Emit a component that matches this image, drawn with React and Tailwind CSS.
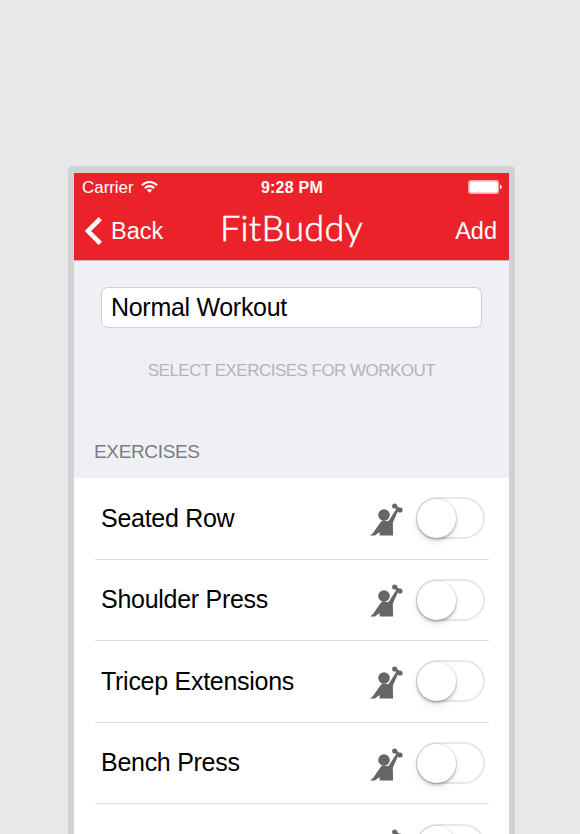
const exercises = ['Seated Row', 'Shoulder Press', 'Tricep Extensions', 'Bench Press', ''];

function LiftIcon() {
  return (
    <svg className="mt-[3px] h-9 w-[34px] shrink-0" viewBox="0 0 34 36" fill="#666666">
      <circle cx="14" cy="13" r="5.8" />
      <circle cx="24.7" cy="4" r="2.6" />
      <circle cx="30" cy="8" r="2.6" />
      <path d="M24.7 4.8 25.9 3.2 31 7 29.8 8.8 28.2 8.6 22.8 20.8 23.1 33.4H9.6V30L5 33.4H.3C1 32.4 2.4 31.7 3.4 30.4L9.6 21.6C10.6 19.8 11.6 18.6 13 18.2L18 19.2C19.2 18.6 19.6 17.8 20.2 16.6L26.2 7Z" />
    </svg>
  );
}

function Toggle() {
  return (
    <div className="ml-3 h-[42px] w-[69px] shrink-0 rounded-full border-2 border-[#e7e7e7] bg-white">
      <div className="-ml-px size-[39px] rounded-full bg-white shadow-[0_2px_3px_rgba(0,0,0,0.24),0_4px_9px_rgba(0,0,0,0.08),0_0_1px_1px_rgba(0,0,0,0.07)]" />
    </div>
  );
}

export default function App() {
  return (
    <div className="h-[834px] w-[580px] overflow-hidden bg-[#e7e8ea] pt-[166px] pl-[68px] font-['Liberation_Sans',Arial,sans-serif]">
      <div className="h-[700px] w-[447px] rounded-t-[5px] border-x-[6px] border-t-[7px] border-[#d0d2d4] bg-white">
        <header className="h-[88px] border-b border-[#c5b9bc] bg-[#ec222b] text-white">
          <div className="grid h-7 grid-cols-3 items-center pr-[7px] pl-2 text-[17px] leading-7">
            <div className="flex items-center gap-[7px]">
              <span className="pt-px tracking-[-0.05px]">Carrier</span>
              <svg className="mb-px h-3 w-[17px]" viewBox="0 0 17 12" fill="none" stroke="white" strokeWidth="2.2">
                <path d="M.9 4.3C5-.1 12-.1 16.1 4.3M3.8 7.2C6.4 4.4 10.6 4.4 13.2 7.2" />
                <path d="M8.5 11.8 5.8 9.1C7.3 7.6 9.7 7.6 11.2 9.1Z" fill="white" stroke="none" />
              </svg>
            </div>
            <span className="pt-px text-center text-base font-bold tracking-[0.25px] whitespace-nowrap">9:28 PM</span>
            <svg className="mb-px h-[14px] w-[34px] justify-self-end" viewBox="0 0 34 14">
              <rect x=".6" y=".6" width="30" height="12.8" rx="2.4" fill="none" stroke="white" strokeOpacity=".6" strokeWidth="1.1" />
              <rect x="1.3" y="1.3" width="28.6" height="11.4" rx="1.6" fill="white" />
              <path d="M32 4.8C34.3 5.5 34.3 8.5 32 9.2Z" fill="white" />
            </svg>
          </div>
          <div className="flex h-[59px] items-center justify-between pr-3 pl-[11px] text-[23.5px]">
            <div className="flex w-[120px] items-center gap-[9px]">
              <svg className="h-7 w-[17px]" viewBox="0 0 17 28" fill="none" stroke="white" strokeWidth="4.6">
                <path d="M15.3 1.6 3 14 15.3 26.4" />
              </svg>
              <span className="pt-[3px]">Back</span>
            </div>
            <h1 className="pb-[6px] pl-px font-['Lato'] text-[36px] leading-[53px] font-light tracking-[0.35px] whitespace-nowrap [-webkit-text-stroke:0.6px_white]">FitBuddy</h1>
            <span className="w-[120px] pt-[3px] text-right">Add</span>
          </div>
        </header>
        <section className="h-[217px] bg-[#eff0f5] pt-[26px]">
          <div className="ml-[27px] flex h-[41px] w-[381px] items-center rounded-[7px] border border-[#cdced1] bg-white pl-[9px] text-[25px] text-black">
            <span className="tracking-[-0.3px]">Normal Workout</span>
          </div>
          <p className="mt-[31px] text-center text-[17px] leading-6 tracking-[-0.52px] text-[#b4b4b6]">SELECT EXERCISES FOR WORKOUT</p>
          <h2 className="mt-[57px] ml-5 text-[19px] leading-6 tracking-[-0.35px] text-[#7b7b80]">EXERCISES</h2>
        </section>
        <ul>
          {exercises.map((name, i) => (
            <li key={i} className="h-[81.6px] pr-5 pl-[21px]">
              <div className="flex h-full items-center border-b border-[#dcdcde] pr-1 pl-1.5">
                <span className="flex-1 text-[25px] tracking-[-0.28px] text-black">{name}</span>
                <LiftIcon />
                <Toggle />
              </div>
            </li>
          ))}
        </ul>
      </div>
    </div>
  );
}
